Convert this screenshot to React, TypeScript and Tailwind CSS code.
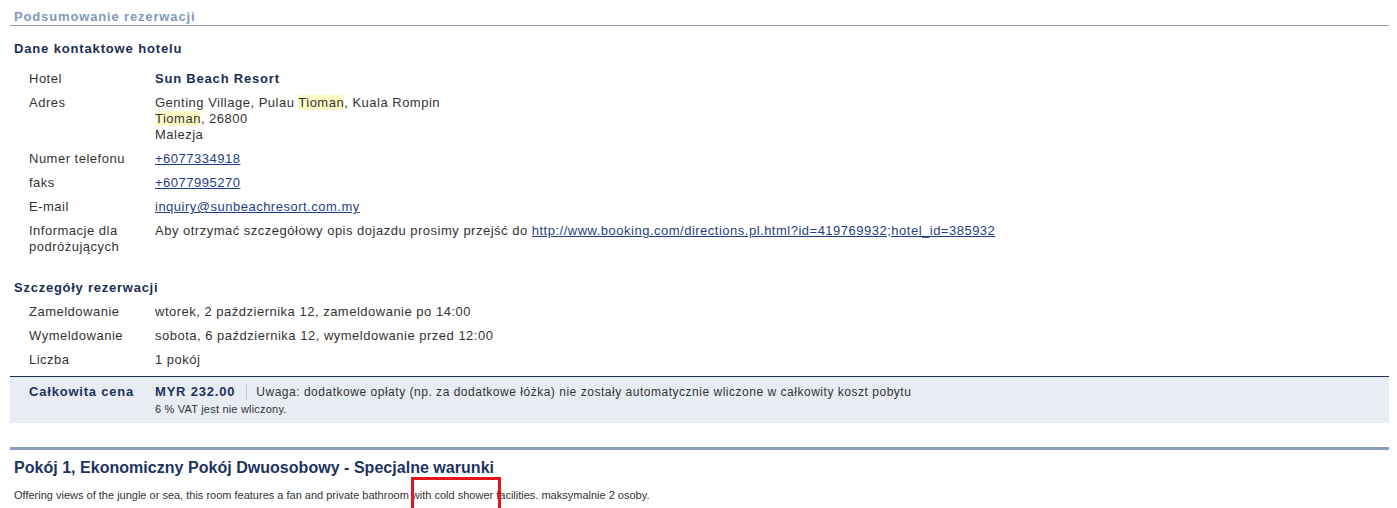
import React from "react";

const font = { fontFamily: '"Liberation Sans", Arial, sans-serif' };

function Row({ label, children }: { label: React.ReactNode; children: React.ReactNode }) {
  return (
    <div className="flex py-1 text-[13px] leading-4 tracking-[0.5px]">
      <div className="w-[126px] shrink-0 text-[#333]">{label}</div>
      <div className="text-[#333]">{children}</div>
    </div>
  );
}

const Hl = ({ children }: { children: React.ReactNode }) => (
  <span className="bg-[#fffbc8]">{children}</span>
);

const A = ({ children }: { children: React.ReactNode }) => (
  <a href="#" className="text-[#1f3f80] underline">{children}</a>
);

export default function App() {
  return (
    <div className="relative w-[1397px] h-[508px] overflow-hidden bg-white" style={font}>
      <div className="pl-[10px] pr-[8px]">
        <div className="h-[26px] border-b border-[#8d9caa] pl-1 pt-[9px] text-[13px] font-bold leading-4 tracking-[0.85px] text-[#8398ba]">
          Podsumowanie rezerwacji
        </div>
        <div className="mt-[15px] pl-1 text-[13px] font-bold leading-4 tracking-[0.85px] text-[#1c2d52]">
          Dane kontaktowe hotelu
        </div>
        <div className="mt-[10px] pl-[19px]">
          <Row label="Hotel">
            <span className="font-bold tracking-[0.8px] text-[#1c2d52]">Sun Beach Resort</span>
          </Row>
          <Row label="Adres">
            Genting Village, Pulau <Hl>Tioman</Hl>, Kuala Rompin
            <br />
            <Hl>Tioman</Hl>, 26800
            <br />
            Malezja
          </Row>
          <Row label="Numer telefonu">
            <A>+6077334918</A>
          </Row>
          <Row label="faks">
            <A>+6077995270</A>
          </Row>
          <Row label="E-mail">
            <A>inquiry@sunbeachresort.com.my</A>
          </Row>
          <Row
            label={
              <>
                Informacje dla
                <br />
                podróżujących
              </>
            }
          >
            Aby otrzymać szczegółowy opis dojazdu prosimy przejść do{" "}
            <A>http://www.booking.com/directions.pl.html?id=419769932;hotel_id=385932</A>
          </Row>
        </div>
        <div className="mt-[21px] pl-1 text-[13px] font-bold leading-4 tracking-[0.75px] text-[#1c2d52]">
          Szczegóły rezerwacji
        </div>
        <div className="mt-1 pl-[19px]">
          <Row label="Zameldowanie">wtorek, 2 października 12, zameldowanie po 14:00</Row>
          <Row label="Wymeldowanie">sobota, 6 października 12, wymeldowanie przed 12:00</Row>
          <Row label="Liczba">1 pokój</Row>
        </div>
        <div className="mt-1 border-t border-[#1e2f4f] bg-[#e8ecf3] pl-[19px] pt-[7px] pb-[7px]">
          <div className="flex">
            <div className="w-[126px] shrink-0 text-[13px] font-bold leading-4 tracking-[0.8px] text-[#1c3360]">
              Całkowita cena
            </div>
            <div>
              <div className="flex h-4 items-center">
                <span className="text-[13px] font-bold leading-4 tracking-[0.8px] text-[#1c3360]">MYR 232.00</span>
                <span className="ml-[11px] mr-[9px] h-4 w-px bg-[#c2c8d2]" />
                <span className="text-[12px] leading-4 tracking-[0.52px] text-[#333]">
                  Uwaga: dodatkowe opłaty (np. za dodatkowe łóżka) nie zostały automatycznie wliczone w całkowity koszt pobytu
                </span>
              </div>
              <div className="mt-[2px] text-[11px] leading-[14px] tracking-[0.2px] text-[#333]">6 % VAT jest nie wliczony.</div>
            </div>
          </div>
        </div>
        <div className="mt-[24px] h-[3px] bg-[#8a9dc0]" />
        <div className="mt-[8px] pl-1 text-[16px] font-bold leading-5 tracking-[0.03px] text-[#1c3360]">
          Pokój 1, Ekonomiczny Pokój Dwuosobowy - Specjalne warunki
        </div>
        <div className="mt-[10px] pl-1 text-[11px] leading-[14px] text-[#333]">
          Offering views of the jungle or sea, this room features a fan and private bathroom with cold shower facilities. maksymalnie 2 osoby.
        </div>
      </div>
      <div className="absolute left-[411px] top-[477px] h-[40px] w-[90px] border-[3px] border-[#e3161d]" />
    </div>
  );
}
